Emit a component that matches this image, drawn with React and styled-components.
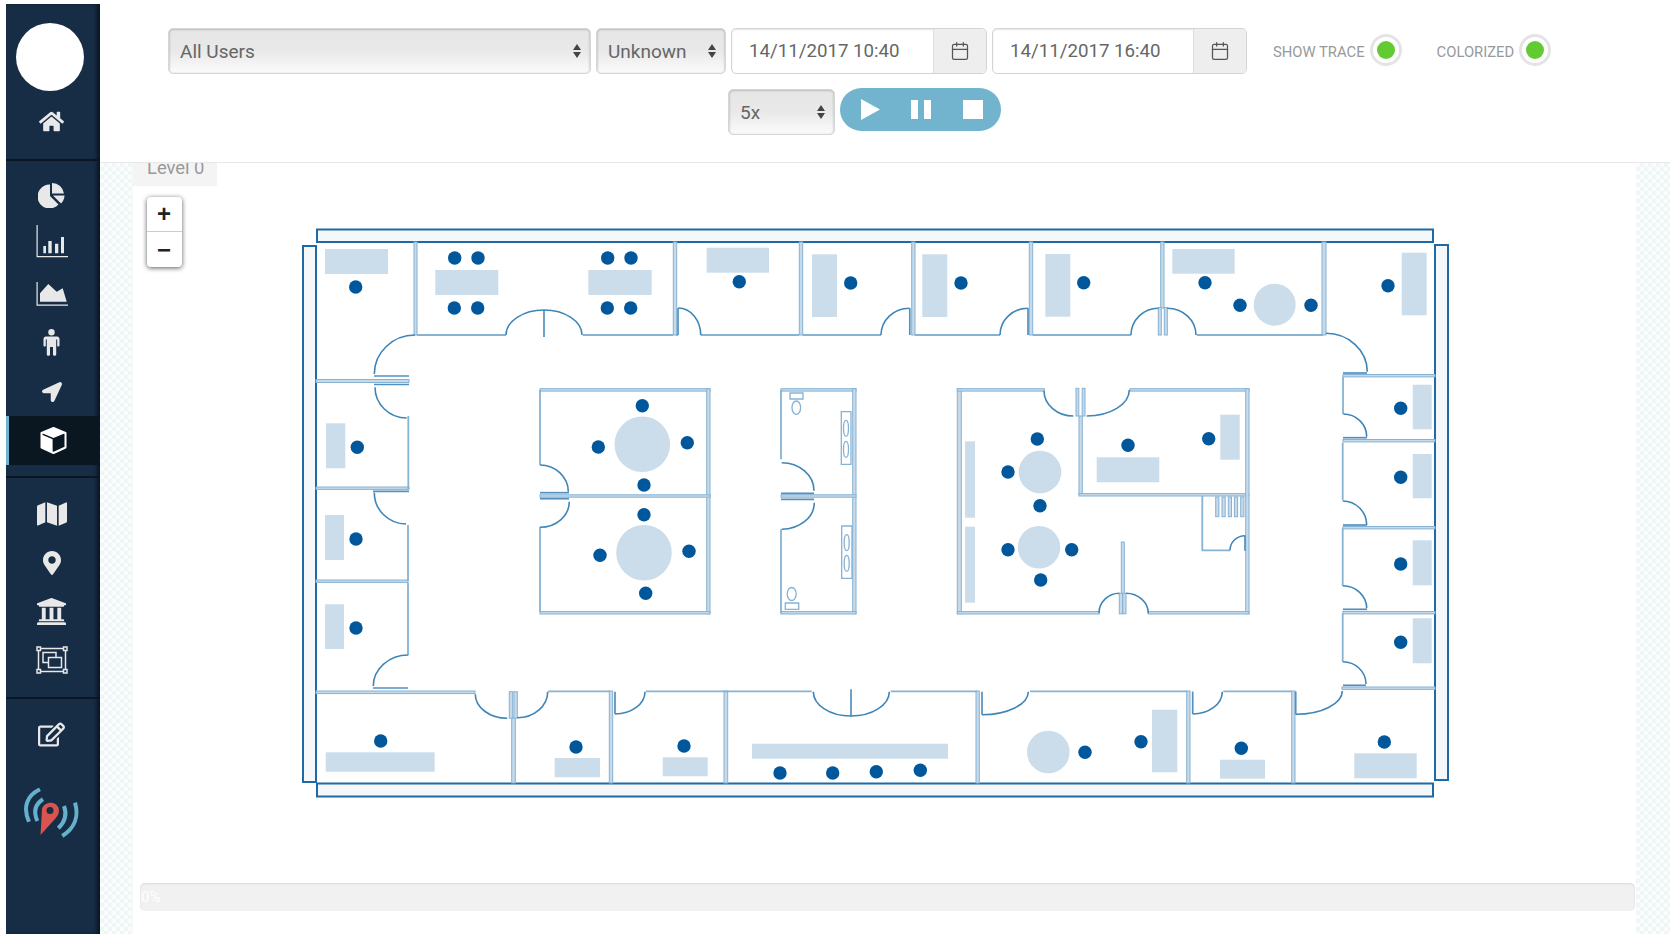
import styled, { createGlobalStyle } from 'styled-components';
import { Calendar } from 'lucide-react';
import {
  FaHome,
  FaLocationArrow,
  FaMap,
  FaMapMarkerAlt,
  FaUniversity,
  FaRegEdit,
} from 'react-icons/fa';

const GlobalStyle = createGlobalStyle`
  html, body {
    margin: 0;
    padding: 0;
    background: #fff;
    overflow: hidden;
  }
  * {
    box-sizing: border-box;
  }
`;

const Page = styled.div`
  display: flex;
  width: 1670px;
  height: 940px;
  font-family: Roboto, 'Liberation Sans', sans-serif;
`;

const Sidebar = styled.nav`
  width: 94px;
  height: 930px;
  margin: 4px 0 0 6px;
  flex: none;
  background: #172d46;
  box-shadow: inset -4px 0 4px -1px rgba(0, 0, 0, 0.55);
  color: #e8e8e8;
`;

const SideSection = styled.div`
  padding: ${(p) => p.$pad};
  height: ${(p) => p.$height};
  border-bottom: ${(p) => (p.$last ? 'none' : '2px solid #0a1622')};
`;

const Avatar = styled.div`
  width: 68px;
  height: 68px;
  border-radius: 50%;
  background: #fff;
  margin: 0 0 6px 10px;
`;

const NavItem = styled.div`
  display: flex;
  align-items: center;
  justify-content: center;
  height: 49px;
  padding-right: 3px;
  border-left: ${(p) => (p.$active ? '3px solid #6fb3cf' : '0')};
  background: ${(p) => (p.$active ? '#0a1720' : 'transparent')};
  color: ${(p) => (p.$active ? '#fff' : '#e8e8e8')};
`;

const LogoWrap = styled.div`
  margin: 29px 0 0 15px;
`;

const Main = styled.main`
  flex: 1;
  min-width: 0;
  height: 934px;
  display: flex;
  flex-direction: column;
`;

const Header = styled.header`
  height: 163px;
  flex: none;
  padding-top: 28px;
  background: #fff;
  border-bottom: 1px solid #e8e8e8;
`;

const FilterRow = styled.div`
  display: flex;
  align-items: flex-start;
  padding-left: 68px;
`;

const PlayRow = styled.div`
  display: flex;
  align-items: flex-start;
  margin: 13px 0 0 628px;
`;

const SelectBox = styled.div`
  display: flex;
  align-items: center;
  justify-content: space-between;
  width: ${(p) => p.$width}px;
  height: 46px;
  margin-right: ${(p) => p.$gap || 0}px;
  padding: 0 9px 0 11px;
  border: 1px solid #d6d6d6;
  border-radius: 5px;
  background: linear-gradient(#e6e6e6 0%, #e9e9e9 50%, #fbfbfb 100%);
  box-shadow: inset 1px 1px 2px rgba(0, 0, 0, 0.14), inset -1px 0 2px rgba(0, 0, 0, 0.12);
  color: #666;
  font-size: 19px;
`;

const Arrows = styled.span`
  display: flex;
  flex-direction: column;
  gap: 2px;
  &::before,
  &::after {
    content: '';
    width: 0;
    height: 0;
    border-left: 4px solid transparent;
    border-right: 4px solid transparent;
  }
  &::before {
    border-bottom: 6px solid #444;
  }
  &::after {
    border-top: 6px solid #444;
  }
`;

const DateGroup = styled.div`
  display: flex;
  width: ${(p) => p.$width}px;
  height: 46px;
  margin-right: ${(p) => p.$gap}px;
  border: 1px solid #d4d4d4;
  border-radius: 5px;
  overflow: hidden;
  box-shadow: inset 0 1px 2px rgba(0, 0, 0, 0.1);
`;

const DateText = styled.div`
  flex: 1;
  display: flex;
  align-items: center;
  padding-left: 17px;
  color: #666;
  font-size: 18.7px;
`;

const DateAddon = styled.div`
  width: 53px;
  display: flex;
  align-items: center;
  justify-content: center;
  background: #eee;
  border-left: 1px solid #ddd;
  color: #555;
`;

const ToggleLabel = styled.span`
  color: #999;
  font-size: 14.8px;
  line-height: 48px;
  margin-left: ${(p) => p.$left}px;
  white-space: nowrap;
`;

const Toggle = styled.span`
  display: flex;
  align-items: center;
  justify-content: center;
  width: 32px;
  height: 32px;
  margin: 6px 0 0 5px;
  border: 3px solid #e4e4e4;
  border-radius: 50%;
  background: #fff;
  &::after {
    content: '';
    width: 18px;
    height: 18px;
    border-radius: 50%;
    background: #62cb31;
  }
`;

const Player = styled.div`
  display: flex;
  align-items: center;
  width: 161px;
  height: 43px;
  margin: -1px 0 0 5px;
  padding-left: 21px;
  border-radius: 22px;
  background: #72b4ce;
`;

const PlayGlyph = styled.svg`
  display: block;
  margin-right: ${(p) => p.$gap}px;
  fill: #fff;
`;

const Content = styled.div`
  flex: 1;
  display: flex;
  min-height: 0;
  background: repeating-conic-gradient(#eff6f8 0 25%, #fbfdfd 0 50%) 0 0 / 8px 8px;
`;

const Strip = styled.div`
  width: ${(p) => p.$width}px;
  flex: none;
`;

const Panel = styled.section`
  position: relative;
  flex: 1;
  min-width: 0;
  background: #fff;
`;

const LevelTab = styled.div`
  width: 84px;
  height: 23px;
  padding-left: 14px;
  overflow: hidden;
  background: #f4f4f4;
  color: #999;
  font-size: 18.4px;
  line-height: 13px;
  span {
    display: block;
    margin-top: -2px;
  }
`;

const ZoomControl = styled.div`
  position: absolute;
  top: 34px;
  left: 14px;
  width: 35px;
  border-radius: 4px;
  background: #fff;
  box-shadow: 0 1px 5px rgba(0, 0, 0, 0.65);
`;

const ZoomButton = styled.div`
  height: 35px;
  display: flex;
  align-items: center;
  justify-content: center;
  padding-right: 1px;
  border-bottom: ${(p) => (p.$top ? '1px solid #ccc' : '0')};
  color: #222;
  font-family: 'Liberation Sans', sans-serif;
  font-size: 24px;
  font-weight: 700;
`;

const PlanSvg = styled.svg`
  display: block;
  margin: 34px 0 63px 157px;
`;

const Progress = styled.div`
  margin: 0 1px 0 7px;
  height: 28px;
  border-radius: 5px;
  background: #f1f1f1;
  box-shadow: inset 0 1px 2px rgba(0, 0, 0, 0.1);
  color: #fff;
  font-size: 15px;
  line-height: 28px;
  padding-left: 1px;
`;

const OuterBar = styled.rect`
  fill: #f4f8fb;
  stroke: #1f6aa5;
  stroke-width: 2;
`;

const Wall = styled.rect`
  fill: #c6daea;
  stroke: #86b2d4;
  stroke-width: 1;
`;

const ThinWall = styled.path`
  fill: none;
  stroke: #86b2d4;
  stroke-width: 1.8;
`;

const DarkLine = styled.path`
  fill: none;
  stroke: #5290c0;
  stroke-width: 1.7;
`;

const Door = styled.path`
  fill: none;
  stroke: #3f86b8;
  stroke-width: 1.6;
`;

const Desk = styled.rect`
  fill: #cbdcea;
`;

const Round = styled.circle`
  fill: #cbdcea;
`;

const Seat = styled.circle`
  fill: #01579b;
`;

const Fixture = styled.path`
  fill: #fff;
  stroke: #86b2d4;
  stroke-width: 1.3;
`;

const bars = [
  [317, 229.5, 1116, 12.5],
  [303, 246, 13, 536],
  [317, 783.5, 1116, 13],
  [1435, 245, 13, 535],
];

const walls = [
  [414, 242, 3, 93],
  [673.3, 242, 3.4, 93],
  [799.3, 242, 3.4, 93],
  [911.7, 242, 3.3, 93],
  [1029.3, 242, 3.4, 93],
  [1160.7, 242, 3.3, 66],
  [1322, 242, 4, 93],
  [511.7, 718, 3.6, 65],
  [609.3, 691, 3.4, 92],
  [724, 691, 3.7, 92],
  [976, 691, 3.3, 92],
  [1186.7, 691, 3.3, 92],
  [1291.7, 691, 3.3, 92],
  [316, 379.5, 93, 3],
  [316, 487, 93, 2.4],
  [316, 580, 92, 2.4],
  [316, 691, 159, 2.6],
  [540, 388.7, 170, 2.4],
  [706.7, 388.7, 3.3, 225],
  [540, 494.8, 170, 2.4],
  [540, 611.6, 170, 2.4],
  [781, 388.7, 75, 2.4],
  [852.7, 388.7, 3.3, 225],
  [781, 494.8, 75, 2.4],
  [781, 611.6, 75, 2.4],
  [957.3, 388.7, 4, 225],
  [957.3, 388.7, 87, 2.4],
  [1079, 416, 3.3, 79],
  [1079, 493.6, 170, 2.4],
  [1130, 388.7, 119, 2.4],
  [1245.7, 388.7, 3.3, 225],
  [957.3, 611.6, 142, 2.4],
  [1148.3, 611.6, 100.7, 2.4],
  [1343, 374.5, 92, 2.4],
  [1343, 439.5, 92, 2.4],
  [1343, 526.5, 92, 2.4],
  [1343, 611.5, 92, 2.4],
  [1342, 687, 93, 2.4],
  [1121.3, 542, 3, 52],
  [509.3, 691.7, 3.4, 26.5],
  [513.9, 691.7, 3.4, 26.5],
  [1158.3, 307.5, 3, 27.5],
  [1164.3, 307.5, 3, 27.5],
  [1119.3, 593.3, 3.2, 20.5],
  [1122.8, 593.3, 3.2, 20.5],
  [1076, 388.3, 2.8, 27.7],
  [1082.2, 388.3, 2.8, 27.7],
  [1215.7, 497, 3.2, 19.7],
  [1222, 497, 3.2, 19.7],
  [1228.3, 497, 3.2, 19.7],
  [1234.4, 497, 3.2, 19.7],
  [1240.7, 497, 3.2, 19.7],
];

const thinWalls = [
  'M417 335H506',
  'M582.7 335H673',
  'M676 335H678',
  'M700.7 335H799',
  'M802.7 335H881',
  'M915 335H1000',
  'M1032.7 335H1131',
  'M1196.7 335H1323',
  'M408.3 416V489',
  'M408 525V581',
  'M408 583V655',
  'M540 390V465',
  'M540 527V612',
  'M781 390V459.3',
  'M781 529.3V613',
  'M548.3 691.3H610',
  'M646 691.3H811.7',
  'M890.7 691.3H976.7',
  'M1030 691.3H1187',
  'M1223.3 691.3H1291.7',
  'M1343 376.7V414',
  'M1342.7 442.7V500',
  'M1342.7 528.3V585.7',
  'M1342.7 613.3V661.7',
  'M1202.3 496V550.3H1230',
];

const darkLines = [
  'M374 376H409',
  'M374 384.5H409',
  'M373 491.3H409',
  'M373 688H408',
  'M540 492.7H569',
  'M540 498.7H569',
  'M781 493.3H814',
  'M781 499.3H814',
  'M1343 373H1367',
  'M1343 437.7H1367',
  'M1343 525H1367',
  'M1343 609.3H1367',
  'M1343 685.3H1366',
  'M544 310V337',
  'M851 689.3V716.7',
  'M678 308V335',
  'M909.8 308V335',
  'M1028 308V335',
  'M615 691.7V714',
  'M982 691.7V714.7',
  'M1192.7 691.5V714',
  'M1295.7 691.5V714.3',
  'M1245 535.7V550.7',
];

// from, to, then whether the door leaves its start point horizontally or vertically
const doors = [
  [415, 335, 374.3, 374, 'h'],
  [375, 387.3, 406.7, 418, 'v'],
  [374.3, 492.7, 406, 524, 'v'],
  [408.3, 655, 373.3, 686, 'h'],
  [475.3, 694.3, 507.3, 718.3, 'v'],
  [517.3, 717.7, 547.7, 691.7, 'h'],
  [615, 714, 645, 691.7, 'h'],
  [813.3, 691.7, 850.7, 716, 'v'],
  [889.3, 691.7, 851, 716, 'v'],
  [982, 714.7, 1028.3, 691.7, 'h'],
  [1192.7, 714, 1222.3, 691.7, 'h'],
  [1295.7, 714.3, 1342.3, 691, 'h'],
  [1366, 684, 1342.7, 661.7, 'v'],
  [1366.7, 608.3, 1342.7, 585.7, 'v'],
  [1342.7, 501, 1366.7, 525, 'h'],
  [1343.3, 414, 1366.7, 436.7, 'h'],
  [1326, 333.3, 1367.3, 371.7, 'h'],
  [1158.3, 308.3, 1131, 335, 'h'],
  [1167.3, 308.3, 1196, 335, 'h'],
  [506, 335, 544, 310, 'v'],
  [582, 335, 544, 310, 'v'],
  [678.3, 308, 700.7, 335, 'h'],
  [881, 335, 909.3, 308.3, 'v'],
  [1000, 335, 1027.7, 308.3, 'v'],
  [540, 465, 568.3, 491.7, 'h'],
  [569.3, 501.7, 540, 527.3, 'v'],
  [781.7, 462.7, 814, 490.7, 'h'],
  [814.3, 502.7, 781.7, 529.3, 'v'],
  [1044, 390.7, 1073.3, 416, 'v'],
  [1086.7, 416, 1129.3, 390, 'h'],
  [1230, 550.3, 1245, 535.7, 'v'],
  [1099, 613, 1119.3, 593.3, 'v'],
  [1126, 593.3, 1148.3, 613.3, 'h'],
];

const desks = [
  [325, 249, 63, 25],
  [435.3, 270, 63, 25],
  [588.3, 270, 63.4, 25],
  [706.7, 247.7, 62.3, 25],
  [812, 254.3, 25, 62.7],
  [922.3, 254.3, 25, 62.7],
  [1045.3, 254, 25, 62.7],
  [1172.3, 249, 62.4, 24.7],
  [1401.7, 252.7, 25, 62.6],
  [1412.7, 384.7, 19, 44.6],
  [1412.7, 454, 19, 44.3],
  [1412.7, 540.3, 19, 45],
  [1412.7, 618.3, 19, 45],
  [1354.3, 753.3, 62.4, 25],
  [1220, 759.7, 45, 19],
  [1152, 709.7, 25.3, 62.6],
  [326, 423.3, 19.3, 45],
  [325, 515, 19, 45],
  [325, 604.3, 19, 44.7],
  [325.7, 752.3, 109, 19.4],
  [554.7, 758, 45.3, 19.3],
  [662.7, 757.3, 45, 19],
  [752, 743.7, 196, 15],
  [965, 441.3, 10, 76.4],
  [965, 526.7, 10, 76],
  [1096.7, 457.3, 62.6, 25],
  [1220.3, 414.7, 19.4, 45],
];

const tables = [
  [642.3, 444.3, 27.8],
  [644, 552.7, 27.8],
  [1040, 472, 21.3],
  [1039, 547.3, 21.3],
  [1274.7, 304.7, 21],
  [1048.3, 752, 21.3],
];

const seats = [
  [355.7, 287], [454.7, 258], [478, 258], [454.3, 308], [477.7, 308],
  [607.7, 258], [631, 258], [607.3, 308], [630.7, 308], [739.3, 281.7],
  [850.7, 283], [961, 283], [1083.7, 282.7], [1205, 282.7], [1240, 305.3],
  [1311, 305.3], [1388, 285.7], [1400.7, 408.3], [1400.7, 477.3], [1400.7, 564],
  [1400.7, 642.3], [1384.3, 742], [1241.3, 748.3], [1141, 741.7], [356, 539],
  [356, 628], [357.3, 447.3], [380.7, 741], [576, 747], [684, 746],
  [780, 773], [832.7, 773], [876.3, 771.7], [920.3, 770.3], [1085, 752.3],
  [642.3, 405.7], [598.3, 447], [687.3, 442.7], [644, 485], [644, 514.7],
  [600, 555.3], [689, 551.3], [645.7, 593.3], [1037.3, 439], [1008, 472],
  [1040, 505.7], [1008, 549.7], [1071.7, 549.7], [1040.7, 580], [1128, 445.3],
  [1208.7, 438.7],
];

const fixtures = [
  'M790 393H803V399H790Z',
  'M841.3 411.7H851V464.3H841.3Z',
  'M841.7 526H852V578.3H841.7Z',
  'M785.3 603H798.7V609.3H785.3Z',
];

const ovals = [
  [796.3, 407.7, 4.3, 6.7],
  [846, 428.3, 2.5, 8],
  [846, 449.3, 2.5, 8],
  [846.7, 542.7, 2.5, 8],
  [846.7, 563.3, 2.5, 8],
  [791.7, 594, 4.5, 6.5],
];

const doorPath = ([x1, y1, x2, y2, leaves]) => {
  const k = 0.55;
  if (leaves === 'h') {
    return `M${x1} ${y1}C${x1 + (x2 - x1) * k} ${y1} ${x2} ${y2 - (y2 - y1) * k} ${x2} ${y2}`;
  }
  return `M${x1} ${y1}C${x1} ${y1 + (y2 - y1) * k} ${x2 - (x2 - x1) * k} ${y2} ${x2} ${y2}`;
};

function FloorPlan() {
  return (
    <PlanSvg width="1180" height="600" viewBox="290 220 1180 600">
      {bars.map(([x, y, w, h]) => (
        <OuterBar key={`${x}-${y}`} x={x} y={y} width={w} height={h} />
      ))}
      {desks.map(([x, y, w, h]) => (
        <Desk key={`${x}-${y}`} x={x} y={y} width={w} height={h} />
      ))}
      {tables.map(([cx, cy, r]) => (
        <Round key={`${cx}-${cy}`} cx={cx} cy={cy} r={r} />
      ))}
      {walls.map(([x, y, w, h]) => (
        <Wall key={`${x}-${y}-${w}`} x={x} y={y} width={w} height={h} />
      ))}
      {thinWalls.map((d) => (
        <ThinWall key={d} d={d} />
      ))}
      {darkLines.map((d) => (
        <DarkLine key={d} d={d} />
      ))}
      {doors.map((door) => (
        <Door key={door.join('-')} d={doorPath(door)} />
      ))}
      {fixtures.map((d) => (
        <Fixture key={d} d={d} />
      ))}
      {ovals.map(([cx, cy, rx, ry]) => (
        <Fixture as="ellipse" key={`${cx}-${cy}`} cx={cx} cy={cy} rx={rx} ry={ry} />
      ))}
      {seats.map(([cx, cy]) => (
        <Seat key={`${cx}-${cy}`} cx={cx} cy={cy} r="6.7" />
      ))}
    </PlanSvg>
  );
}

const PieIcon = () => (
  <svg width="27" height="25" viewBox="0 0 27 25" fill="currentColor">
    <path d="M12 1.5V13L20.5 21.5A12 12 0 1 1 12 1.5Z" />
    <path d="M14 0A12 12 0 0 1 26 10.5H14Z" />
    <path d="M15 12.5H26.5A12 12 0 0 1 23 20.5Z" />
  </svg>
);

const BarIcon = () => (
  <svg width="32" height="33" viewBox="0 0 32 33" fill="currentColor" style={{ marginTop: -7 }}>
    <path d="M.5 0H1.7V31H32V32.2H.5Z" />
    <path d="M7.3 21H10V28.3H7.3ZM12.3 16H15.7V28.3H12.3ZM19 18.7H22.3V28.3H19ZM25 12H28V28.3H25Z" />
  </svg>
);

const AreaIcon = () => (
  <svg width="32" height="25" viewBox="0 0 32 25" fill="currentColor" style={{ marginTop: 2 }}>
    <path d="M.5 0H1.7V22.6H32V23.8H.5Z" />
    <path d="M4 19.7V11.3L12.3 2L20.7 9.7L26.7 6.3L30.7 19.7Z" />
  </svg>
);

const MaleIcon = () => (
  <svg width="17" height="27" viewBox="0 0 17 27" fill="currentColor">
    <circle cx="8.500" cy="3.200" r="3.200" />
    <path d="M3 7.500H14C15.500 7.500 16.500 8.500 16.500 10V16.500C16.500 17.800 14.200 17.800 14.200 16.500V10.500H13.200V25.500C13.200 27.200 10 27.200 10 25.500V18H7V25.500C7 27.200 3.800 27.200 3.800 25.500V10.500H2.800V16.500C2.800 17.800 .5 17.800 .5 16.500V10C.5 8.500 1.500 7.500 3 7.500Z" />
  </svg>
);

const CubeIcon = () => (
  <svg width="27" height="27" viewBox="0 0 27 27">
    <path d="M13.5 1L25.5 6V20.5L13.5 26L1.5 20.5V6Z" fill="none" stroke="#fff" strokeWidth="2" strokeLinejoin="round" />
    <path d="M13.5 1L25.5 6L13.5 11L1.5 6Z" fill="#fff" />
    <path d="M1.5 7.5L12.6 12.2V25.5L1.5 20.5Z" fill="#fff" />
  </svg>
);

const UngroupIcon = () => (
  <svg width="32" height="28" viewBox="0 0 32 28" fill="none" stroke="currentColor" strokeWidth="1.5" style={{ marginTop: -2 }}>
    <path d="M3 2.500H29M3 25.500H29M2.500 3V25M29.500 3V25" />
    <rect x="1" y="1" width="3.500" height="3.500" fill="#172d46" />
    <rect x="27.500" y="1" width="3.500" height="3.500" fill="#172d46" />
    <rect x="1" y="23.500" width="3.500" height="3.500" fill="#172d46" />
    <rect x="27.500" y="23.500" width="3.500" height="3.500" fill="#172d46" />
    <rect x="7" y="6.500" width="13" height="10" />
    <rect x="12.500" y="11.500" width="13" height="10" fill="#172d46" />
  </svg>
);

const Logo = () => (
  <svg width="60" height="52" viewBox="0 0 60 52" fill="none">
    <g stroke="#66b0cb" strokeWidth="4">
      <path d="M19 1.300C7 7 1 18 8 33.700" />
      <path d="M22 11.300C14.500 16 12 23 16.300 33" />
      <path d="M54 14.700C58 28 54 40 41.300 48" />
      <path d="M43 18C46 26 44 34 37.300 40.300" />
    </g>
    <path d="M19.500 47L21 21C23 13 35 12.500 37.500 20C39 25 36 29 33.500 31.500Z" fill="#d9534f" />
    <circle cx="29" cy="22.500" r="3.500" fill="#172d46" />
  </svg>
);

export default function App() {
  return (
    <>
      <GlobalStyle />
      <Page>
        <Sidebar>
          <SideSection $height="157px" $pad="19px 0 0">
            <Avatar />
            <NavItem><FaHome size={25} /></NavItem>
          </SideSection>
          <SideSection $height="317px" $pad="10px 0 0">
            <NavItem><PieIcon /></NavItem>
            <NavItem><BarIcon /></NavItem>
            <NavItem><AreaIcon /></NavItem>
            <NavItem><MaleIcon /></NavItem>
            <NavItem><FaLocationArrow size={20} /></NavItem>
            <NavItem $active><CubeIcon /></NavItem>
          </SideSection>
          <SideSection $height="221px" $pad="11px 0 0">
            <NavItem><FaMap size={30} /></NavItem>
            <NavItem><FaMapMarkerAlt size={24} /></NavItem>
            <NavItem><FaUniversity size={31} /></NavItem>
            <NavItem><UngroupIcon /></NavItem>
          </SideSection>
          <SideSection $last $height="235px" $pad="11px 0 0">
            <NavItem><FaRegEdit size={27} /></NavItem>
            <LogoWrap><Logo /></LogoWrap>
          </SideSection>
        </Sidebar>
        <Main>
          <Header>
            <FilterRow>
              <SelectBox $width={423} $gap={5}>All Users<Arrows /></SelectBox>
              <SelectBox $width={130} $gap={5}>Unknown<Arrows /></SelectBox>
              <DateGroup $width={256} $gap={5}>
                <DateText>14/11/2017 10:40</DateText>
                <DateAddon><Calendar size={20} strokeWidth={1.5} /></DateAddon>
              </DateGroup>
              <DateGroup $width={255} $gap={0}>
                <DateText>14/11/2017 16:40</DateText>
                <DateAddon><Calendar size={20} strokeWidth={1.5} /></DateAddon>
              </DateGroup>
              <ToggleLabel $left={26}>SHOW TRACE</ToggleLabel>
              <Toggle />
              <ToggleLabel $left={35}>COLORIZED</ToggleLabel>
              <Toggle />
            </FilterRow>
            <PlayRow>
              <SelectBox $width={107}>5x<Arrows /></SelectBox>
              <Player>
                <PlayGlyph $gap={31} width="19" height="21" viewBox="0 0 19 21"><path d="M0 0L19 10.500L0 21Z" /></PlayGlyph>
                <PlayGlyph $gap={32} width="20" height="19" viewBox="0 0 20 19"><path d="M0 0H7V19H0ZM13 0H20V19H13Z" /></PlayGlyph>
                <PlayGlyph width="20" height="19" viewBox="0 0 20 19"><path d="M0 0H20V19H0Z" /></PlayGlyph>
              </Player>
            </PlayRow>
          </Header>
          <Content>
            <Strip $width={33} />
            <Panel>
              <LevelTab><span>Level 0</span></LevelTab>
              <ZoomControl>
                <ZoomButton $top>+</ZoomButton>
                <ZoomButton>−</ZoomButton>
              </ZoomControl>
              <FloorPlan />
              <Progress>0%</Progress>
            </Panel>
            <Strip $width={34} />
          </Content>
        </Main>
      </Page>
    </>
  );
}
